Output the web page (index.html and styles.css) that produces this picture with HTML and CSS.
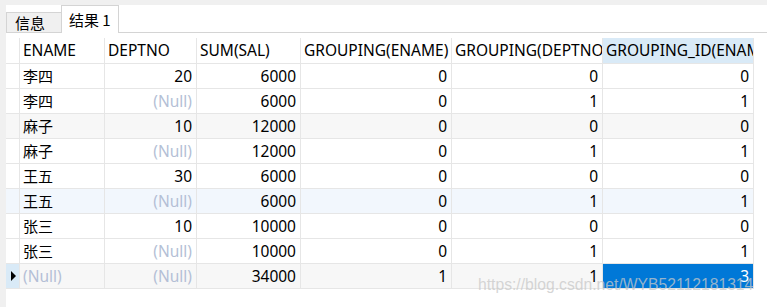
FILE: index.html
```html
<!DOCTYPE html>
<html>
<head>
<meta charset="utf-8">
<link rel="stylesheet" href="styles.css">
</head>
<body>
<div class="top"></div>
<div class="frame">
  <div class="strip"></div>
  <div class="main">
    <div class="tabs">
      <div class="tab">信息</div>
      <div class="tab active">结果 1</div>
      <div class="tabfill"></div>
    </div>
    <div class="grid">
      <div class="c ind"></div><div class="c h">ENAME</div><div class="c h">DEPTNO</div><div class="c h">SUM(SAL)</div><div class="c h">GROUPING(ENAME)</div><div class="c h">GROUPING(DEPTNO)</div><div class="c h sel">GROUPING_ID(ENAME, DEPTNO)</div>

      <div class="c ind"></div><div class="c">李四</div><div class="c n">20</div><div class="c n">6000</div><div class="c n">0</div><div class="c n">0</div><div class="c n">0</div>
      <div class="c ind"></div><div class="c">李四</div><div class="c n null">(Null)</div><div class="c n">6000</div><div class="c n">0</div><div class="c n">1</div><div class="c n">1</div>
      <div class="c ind g"></div><div class="c g">麻子</div><div class="c n g">10</div><div class="c n g">12000</div><div class="c n g">0</div><div class="c n g">0</div><div class="c n g">0</div>
      <div class="c ind"></div><div class="c">麻子</div><div class="c n null">(Null)</div><div class="c n">12000</div><div class="c n">0</div><div class="c n">1</div><div class="c n">1</div>
      <div class="c ind"></div><div class="c">王五</div><div class="c n">30</div><div class="c n">6000</div><div class="c n">0</div><div class="c n">0</div><div class="c n">0</div>
      <div class="c ind b"></div><div class="c b">王五</div><div class="c n null b">(Null)</div><div class="c n b">6000</div><div class="c n b">0</div><div class="c n b">1</div><div class="c n b">1</div>
      <div class="c ind"></div><div class="c">张三</div><div class="c n">10</div><div class="c n">10000</div><div class="c n">0</div><div class="c n">0</div><div class="c n">0</div>
      <div class="c ind"></div><div class="c">张三</div><div class="c n null">(Null)</div><div class="c n">10000</div><div class="c n">0</div><div class="c n">1</div><div class="c n">1</div>
      <div class="c ind cur"><span class="arrow"></span></div><div class="c null g">(Null)</div><div class="c n null g">(Null)</div><div class="c n g">34000</div><div class="c n g">1</div><div class="c n g">1</div><div class="c n pick">3</div>
    </div>
  </div>
</div>
<div class="mark">https://blog.csdn.net/WYB52112181314</div>
</body>
</html>
```
FILE: styles.css
```css
html, body {
  margin: 0;
  padding: 0;
  background: #ffffff;
  width: 767px;
  height: 307px;
  overflow: hidden;
  font-family: "Noto Sans", "Noto Sans CJK SC", sans-serif;
  font-size: 15px;
  color: #000;
}
.top {
  height: 5px;
  background: #f0f0f0;
}
.frame {
  display: flex;
  height: 302px;
}
.strip {
  width: 6px;
  background: #f0f0f0;
  flex: none;
}
.main {
  flex: 1;
  display: flex;
  flex-direction: column;
}
.tabs {
  display: flex;
  align-items: flex-end;
  height: 28px;
}
.tab {
  box-sizing: border-box;
  height: 21px;
  width: 55px;
  background: #f0f0f0;
  border: 1px solid #d4d4d4;
  border-right: none;
  padding-left: 8px;
  line-height: 20px;
  font-family: "Noto Sans CJK SC", sans-serif;
}
.tab.active {
  height: 28px;
  width: 58px;
  background: #fff;
  border-right: 1px solid #d4d4d4;
  border-bottom: none;
  padding-left: 7px;
  line-height: 28px;
}
.tabfill {
  flex: 1;
  border-bottom: 1px solid #d4d4d4;
}
.grid {
  margin-top: 5px;
  display: grid;
  grid-template-columns: 14px 85px 92px 104px 151px 151px 151px;
  grid-template-rows: 26px repeat(9, 25px);
  width: 748px;
}
.c {
  box-sizing: border-box;
  border-right: 1px solid #e6e6e6;
  border-bottom: 1px solid #e6e6e6;
  padding: 0 4px 0 3px;
  line-height: 24px;
  white-space: nowrap;
  overflow: hidden;
  font-family: "Noto Sans CJK SC", sans-serif;
}
.h {
  line-height: 25px;
  font-family: "Noto Sans", sans-serif;
  font-size: 15.5px;
}
.n {
  text-align: right;
  font-family: "Noto Sans", sans-serif;
  font-size: 15.5px;
}
.null {
  color: #b4bfd6;
  font-family: "Noto Sans", sans-serif;
  font-size: 15.5px;
}
.ind {
  padding: 0;
  position: relative;
}
.sel {
  background: #d9eaf7;
}
.g {
  background: #f7f7f7;
}
.b {
  background: #f2f7fd;
}
.cur {
  background: #d9eaf7;
}
.arrow {
  display: block;
  width: 0;
  height: 0;
  margin: 7px 0 0 5px;
  border-top: 5px solid transparent;
  border-bottom: 5px solid transparent;
  border-left: 5px solid #000;
}
.pick {
  background: #0078d7;
  color: #fff;
}
.mark {
  position: absolute;
  left: 478px;
  top: 276px;
  font-family: "Liberation Sans", sans-serif;
  font-size: 15.7px;
  color: rgba(200, 200, 200, 0.75);
}
```
